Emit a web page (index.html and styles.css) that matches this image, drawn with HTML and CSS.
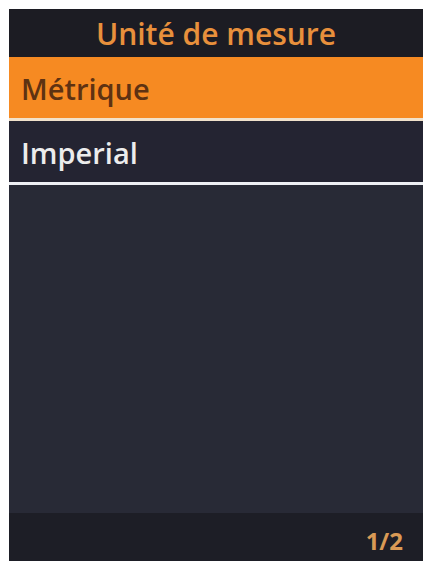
FILE: index.html
```html
<!DOCTYPE html>
<html lang="fr">
<head>
<meta charset="utf-8">
<title>Unité de mesure</title>
<link rel="stylesheet" href="styles.css">
</head>
<body>
<div class="screen">
  <div class="header">Unité de mesure</div>
  <ul class="options">
    <li class="option selected">Métrique</li>
    <li class="option">Imperial</li>
  </ul>
  <div class="spacer"></div>
  <div class="footer"><span class="page">1/2</span></div>
</div>
</body>
</html>
```

FILE: styles.css
```css
html, body {
  margin: 0;
  padding: 0;
  background: #ffffff;
}
body {
  padding: 9px 5px 7px 9px;
  font-family: "Open Sans", "Noto Sans", sans-serif;
}
.screen {
  width: 414px;
  height: 552px;
  display: flex;
  flex-direction: column;
  background: #282a36;
}
.header {
  height: 48px;
  flex: none;
  background: #1c1c23;
  color: #e8903c;
  font-size: 30px;
  font-weight: 600;
  line-height: 50px;
  text-align: center;
}
.options {
  list-style: none;
  margin: 0;
  padding: 0;
}
.option {
  height: 61px;
  line-height: 63px;
  padding-left: 12px;
  font-size: 29px;
  font-weight: 600;
  color: #ececec;
  background: #242432;
  border-bottom: 3px solid #eef0f4;
}
.option.selected {
  height: 61px;
  background: #f68a22;
  color: #5e3212;
  border-bottom-color: #f1e2cb;
}
.spacer {
  flex: 1;
}
.footer {
  height: 48px;
  flex: none;
  background: #1d1e26;
  display: flex;
  align-items: center;
  justify-content: flex-end;
  padding-right: 20px;
}
.page {
  color: #d99a55;
  font-size: 24px;
  font-weight: 700;
  padding-top: 6px;
}
```
